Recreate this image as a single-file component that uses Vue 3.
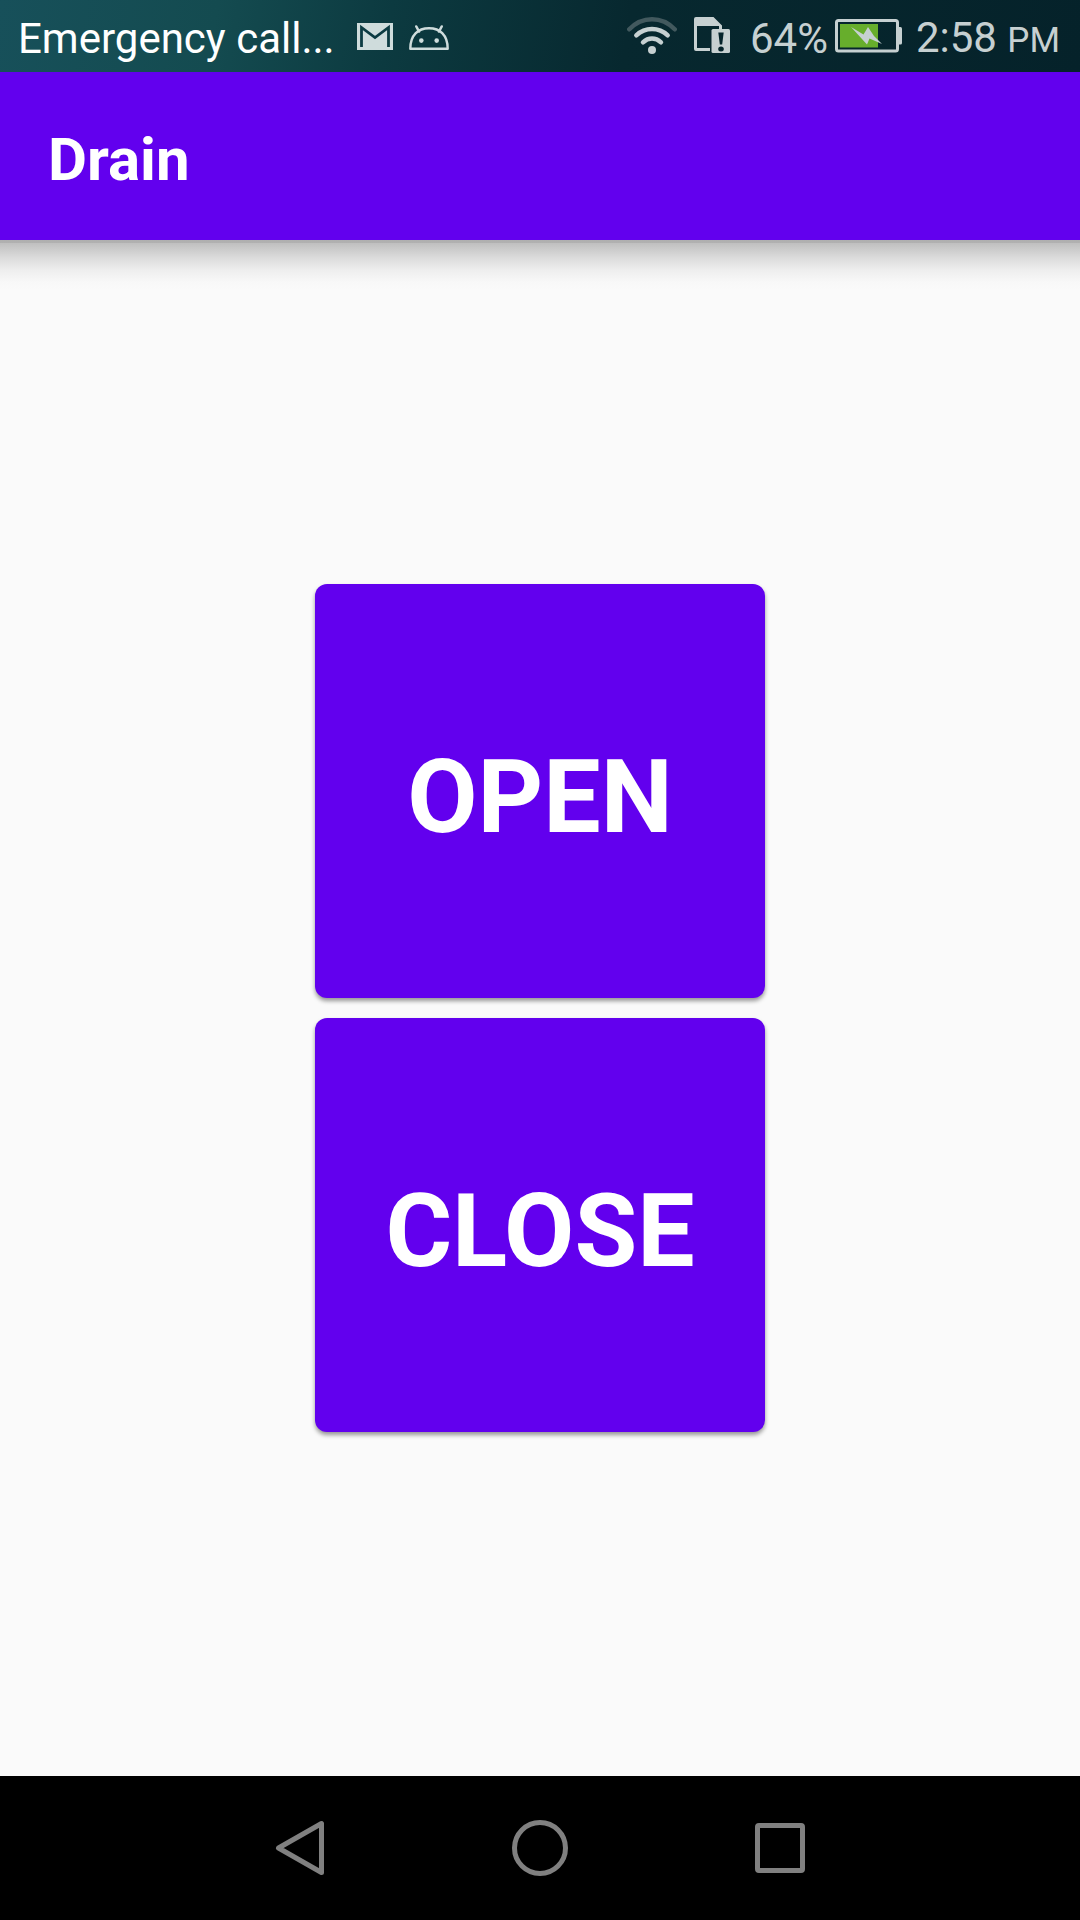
<script setup>
import { ref } from 'vue'

const valve = ref('')
const actions = [
  { id: 'open', label: 'OPEN' },
  { id: 'close', label: 'CLOSE' },
]
</script>

<template>
  <div class="screen">
    <div class="status-bar">
      <span class="carrier">Emergency call...</span>
      <div class="notifications">
        <svg width="36" height="27" viewBox="0 0 36 27" role="img" aria-label="Mail">
          <path d="M0 0h36v27H0z" fill="#cfdcdc" />
          <path d="M4.5 24V4.5L18 14.5 31.5 4.5V24" fill="none" stroke="#0c3b42" stroke-width="2.8" />
        </svg>
        <svg width="40" height="27" viewBox="0 0 40 27" role="img" aria-label="Android">
          <path d="M1.3 25.7C1.3 12 9 5.3 20 5.3S38.7 12 38.7 25.7Z" fill="none" stroke="#cfdcdc" stroke-width="2.4" stroke-linejoin="round" />
          <path d="M10 8.5 7.3 3.5M30 8.5l2.7-5" stroke="#cfdcdc" stroke-width="2.6" stroke-linecap="round" />
          <circle cx="12.3" cy="17.6" r="2.3" fill="#cfdcdc" />
          <circle cx="27.7" cy="17.6" r="2.3" fill="#cfdcdc" />
        </svg>
      </div>
      <div class="system">
        <svg class="wifi" width="50" height="38" viewBox="0 0 50 38" fill="none" stroke="#c6d0d1" stroke-width="4.5" stroke-linecap="round" role="img" aria-label="Wi-Fi">
          <path d="M2.3 12.3Q12 2.3 25 2.3T47.7 12.3" stroke="#42595e" />
          <path d="M9.3 18.3Q16 12 25 12T40.7 18.3" />
          <path d="M16 25.3Q20 21.5 25 21.5T34 25.3" />
          <circle cx="25" cy="33" r="4" fill="#c6d0d1" stroke="none" />
        </svg>
        <svg class="sim" width="36" height="38" viewBox="0 0 36 38" role="img" aria-label="SIM warning">
          <path fill="#c6d0d1" fill-rule="evenodd" d="M2 0H19.5L28 8.5V34H2Q0 34 0 32V2Q0 0 2 0ZM3 9V31H25V9Z" />
          <path d="M16 11h3v24h-3z" fill="#06252c" />
          <rect x="17.5" y="12" width="18.500" height="24" rx="1.5" fill="#c6d0d1" />
          <path d="M24.300 15.500h5.400l-1.500 12h-2.400z" fill="#06252c" />
          <ellipse cx="27" cy="32" rx="2.800" ry="2.500" fill="#06252c" />
        </svg>
        <span class="percent">64%</span>
        <svg class="battery" width="67" height="34" viewBox="0 0 67 34" role="img" aria-label="Battery charging">
          <rect x="1.5" y="1.5" width="61" height="30.5" rx="2" fill="none" stroke="#c6d0d1" stroke-width="3" />
          <path d="M64 8h1.500q1.500 0 1.500 1.500v14.500q0 1.500-1.500 1.500H64z" fill="#c6d0d1" />
          <path d="M5 5h38v23.500H5z" fill="#67ae2c" />
          <path d="M16 8 28.500 15.500 33 8 39 17 47 25 34.500 19.500 32 25.500Z" fill="#c6d0d1" />
        </svg>
        <time class="clock">2:58 <span class="meridiem">PM</span></time>
      </div>
    </div>

    <header class="app-bar">
      <h1>Drain</h1>
    </header>

    <main class="controls">
      <button v-for="a in actions" :key="a.id" type="button" class="action" @click="valve = a.id">
        {{ a.label }}
      </button>
    </main>

    <nav class="nav-bar">
      <button type="button" aria-label="Back">
        <svg width="60" height="60" viewBox="0 0 60 60"><path d="M8.500 30 51.500 5.500V54.500Z" /></svg>
      </button>
      <button type="button" aria-label="Home">
        <svg width="60" height="60" viewBox="0 0 60 60"><circle cx="30" cy="30" r="25.500" /></svg>
      </button>
      <button type="button" aria-label="Recent apps">
        <svg width="60" height="60" viewBox="0 0 60 60"><rect x="7.500" y="7.500" width="45" height="45" rx="1.500" /></svg>
      </button>
    </nav>
  </div>
</template>

<style>
body {
  margin: 0;
  background: #fafafa;
}
</style>

<style scoped>
.screen {
  display: flex;
  flex-direction: column;
  min-height: 100vh;
  background: #fafafa;
  font-family: Roboto, "Liberation Sans", sans-serif;
}

.status-bar {
  display: flex;
  align-items: center;
  box-sizing: border-box;
  height: 72px;
  padding: 0 20px 0 18px;
  background: linear-gradient(100deg, #17505a 0%, #144b50 20%, #0c3a40 36%, #07282f 58%, #05222a 100%);
  color: #c6d0d1;
  font-size: 42px;
  line-height: 48px;
  white-space: nowrap;
}

.carrier,
.percent,
.clock {
  padding-top: 6px;
}

.carrier {
  color: #fff;
}

.notifications {
  display: flex;
  align-items: center;
  gap: 16px;
  margin-left: 22px;
}

.system {
  display: flex;
  align-items: center;
  margin-left: auto;
}

.wifi {
  margin-right: 17px;
}

.sim {
  margin-right: 20px;
}

.battery {
  margin: 0 14px 0 7px;
}

.meridiem {
  font-size: 35px;
}

.app-bar {
  display: flex;
  align-items: center;
  box-sizing: border-box;
  height: 168px;
  padding: 8px 48px 0;
  background: #6200ee;
  color: #fff;
}

h1 {
  margin: 0;
  font-size: 60px;
  font-weight: 700;
  line-height: 72px;
}

/* The gradient is the shadow that the app bar casts on the content. */
.controls {
  display: flex;
  flex: 1;
  flex-direction: column;
  align-items: center;
  justify-content: center;
  gap: 20px;
  background: linear-gradient(#afafaf 0, #b1b1b1 3px, #bfbfbf 3px, #dadada 17px, #eeeeee 30px, #f8f8f8 42px, #fafafa 50px);
}

.action {
  width: 450px;
  max-width: 100%;
  height: 414px;
  padding: 12px 0 0;
  border: 0;
  border-radius: 12px;
  background: #6200ee;
  box-shadow: 0 3px 4px rgba(0, 0, 0, 0.4);
  color: #fff;
  font-family: inherit;
  font-size: 102px;
  font-weight: 700;
  line-height: 120px;
}

.nav-bar {
  display: flex;
  justify-content: center;
  height: 144px;
  background: #000;
}

.nav-bar button {
  display: flex;
  flex: 0 1 240px;
  align-items: center;
  justify-content: center;
  padding: 0;
  border: 0;
  background: none;
}

.nav-bar svg {
  fill: none;
  stroke: #808080;
  stroke-width: 5;
  stroke-linejoin: round;
}
</style>
